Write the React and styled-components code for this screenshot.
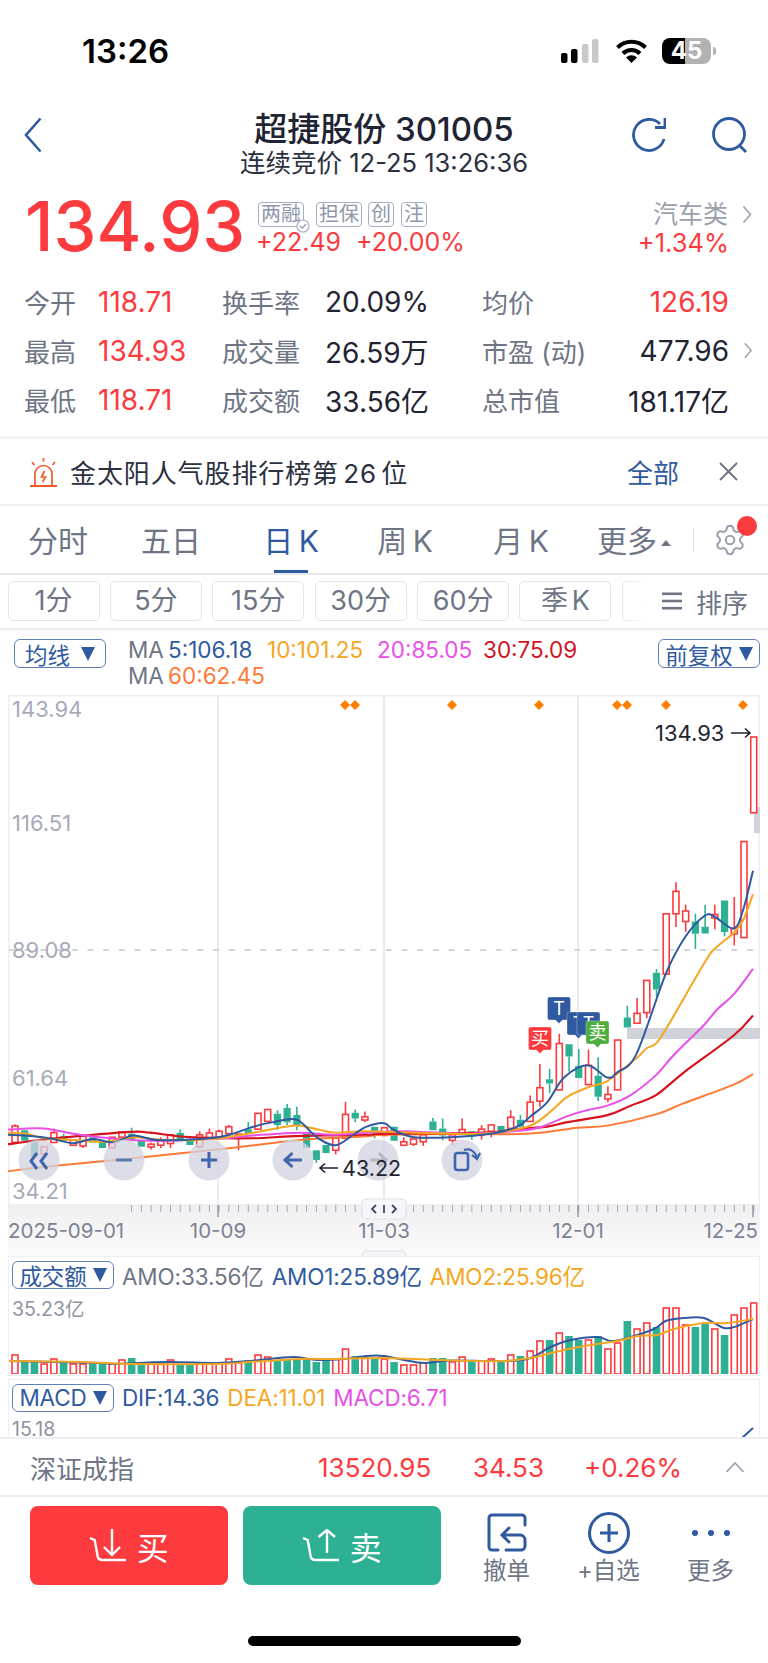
import React from 'react';
import styled, { createGlobalStyle } from 'styled-components';
import { Settings } from 'lucide-react';

const RED = '#fd3a3d';
const GREEN = '#2db094';
const BLUE = '#2f5aa0';
const ORANGE = '#f5a623';
const MAGENTA = '#e94fe9';
const DARKRED = '#d5121e';
const CORAL = '#ff7a35';
const GREY = '#6e7585';
const INK = '#1f2433';

const GlobalStyle = createGlobalStyle`
  html, body { margin: 0; padding: 0; background: #fff; }
  body { font-family: Inter, "Noto Sans CJK SC", sans-serif; }
  * { box-sizing: border-box; }
`;

const Page = styled.div`
  width: 768px;
  height: 1663px;
  overflow: hidden;
  background: #fff;
  display: flex;
  flex-direction: column;
  color: ${INK};
`;

/* status bar */
const StatusBar = styled.div`
  height: 100px;
  padding: 31px 57px 0 82px;
  display: flex;
  justify-content: space-between;
  align-items: flex-start;
`;
const Clock = styled.div`
  font-size: 33px;
  font-weight: 600;
  line-height: 40px;
  color: #000;
`;
const StatusIcons = styled.div`
  display: flex;
  align-items: center;
  height: 40px;
`;
const Battery = styled.div`
  width: 49px;
  height: 26px;
  margin-left: 14px;
  border-radius: 8px;
  background: linear-gradient(90deg, #000 47%, #b2b2b2 47%);
  color: #fff;
  font-size: 24px;
  font-weight: 700;
  line-height: 26px;
  text-align: center;
  position: relative;
  &::after {
    content: '';
    position: absolute;
    right: -5px;
    top: 9px;
    width: 3px;
    height: 8px;
    border-radius: 0 3px 3px 0;
    background: #b2b2b2;
  }
`;

/* nav */
const Nav = styled.div`
  height: 82px;
  display: flex;
  align-items: flex-start;
`;
const NavSide = styled.div`
  width: 140px;
  display: flex;
  justify-content: ${p => (p.$right ? 'flex-end' : 'flex-start')};
  gap: 46px;
  padding: 17px ${p => (p.$right ? '21px' : '0')} 0 ${p => (p.$right ? '0' : '24px')};
`;
const NavTitle = styled.div`
  flex: 1;
  text-align: center;
  padding-top: 9px;
`;
const Title = styled.div`
  font-size: 33px;
  font-weight: 500;
  line-height: 40px;
`;
const Subtitle = styled.div`
  font-size: 25.5px;
  line-height: 28px;
  color: #2b3040;
`;

/* quote head */
const QuoteHead = styled.div`
  height: 95px;
  padding: 0 16px 0 25px;
  display: flex;
`;
const BigPrice = styled.div`
  width: 233px;
  font-size: 68.5px;
  font-weight: 500;
  line-height: 66px;
  margin-top: 12px;
  color: ${RED};
`;
const QuoteMid = styled.div`
  flex: 1;
  padding-top: 20px;
`;
const TagRow = styled.div`
  display: flex;
`;
const Tag = styled.span`
  position: relative;
  height: 25px;
  padding: 0 2px;
  margin-right: ${p => p.$gap || 6}px;
  border: 1.3px solid #a7aec4;
  border-radius: 4px;
  color: #8f96ad;
  font-size: 20px;
  line-height: 22px;
  white-space: nowrap;
`;
const TagCheck = styled.svg`
  position: absolute;
  right: -7px;
  bottom: -7px;
  width: 14px;
  height: 14px;
`;
const ChangeRow = styled.div`
  display: flex;
  gap: 15px;
  margin-left: -2px;
  font-size: 25px;
  line-height: 30px;
  color: ${RED};
`;
const QuoteRight = styled.div`
  padding-top: 15px;
  text-align: right;
`;
const Sector = styled.div`
  display: flex;
  align-items: center;
  justify-content: flex-end;
  gap: 14px;
  font-size: 25px;
  line-height: 34px;
  color: #9a9fab;
`;
const SectorChange = styled.div`
  margin-right: 23px;
  margin-top: -3px;
  font-size: 25.5px;
  line-height: 30px;
  color: ${RED};
`;

/* stats */
const Stats = styled.div`
  padding-left: 24px;
  display: grid;
  grid-template-columns: 74px 124px 103px 157px 120px 127px 1fr;
  grid-auto-rows: 49px;
  align-items: center;
  font-size: 26px;
  height: 162px;
  border-bottom: 3px solid #f1f2f5;
`;
const StatLabel = styled.div`
  color: ${GREY};
  white-space: nowrap;
`;
const StatValue = styled.div`
  font-size: 28px;
  color: ${p => (p.$red ? RED : INK)};
  text-align: ${p => (p.$end ? 'right' : 'left')};
  white-space: nowrap;
`;
const StatArrow = styled.div`
  padding-left: 14px;
  display: flex;
  align-items: center;
`;

/* alert */
const AlertRow = styled.div`
  height: 67px;
  padding: 0 30px 0 29px;
  display: flex;
  align-items: center;
  border-bottom: 2px solid #eeeff2;
`;
const AlertText = styled.div`
  flex: 1;
  margin-left: 12px;
  font-size: 26px;
  letter-spacing: 0.9px;
  word-spacing: -4px;
  color: #2b3040;
`;
const AlertLink = styled.div`
  margin-right: 40px;
  font-size: 26px;
  color: ${BLUE};
`;

/* period tabs */
const Tabs = styled.div`
  height: 69px;
  display: flex;
  align-items: center;
  border-bottom: 2px solid #e8e9ee;
`;
const Tab = styled.div`
  position: relative;
  width: ${p => p.$w}px;
  height: 67px;
  line-height: 70px;
  text-align: center;
  font-size: 30px;
  word-spacing: -3px;
  color: ${p => (p.$active ? BLUE : GREY)};
  white-space: nowrap;
  &::after {
    content: '';
    display: ${p => (p.$active ? 'block' : 'none')};
    position: absolute;
    left: 50%;
    bottom: 0;
    margin-left: -17px;
    width: 34px;
    height: 3px;
    background: ${BLUE};
  }
`;
const Caret = styled.span`
  display: inline-block;
  width: 0;
  height: 0;
  margin-left: 4px;
  vertical-align: 6px;
  border-left: 5px solid transparent;
  border-right: 5px solid transparent;
  border-bottom: 6px solid ${GREY};
`;
const TabDivider = styled.div`
  width: 1px;
  height: 24px;
  margin-left: 13px;
  background: #e3e4e9;
`;
const GearWrap = styled.div`
  position: relative;
  margin-left: 19px;
  width: 34px;
  height: 34px;
`;
const RedDot = styled.div`
  position: absolute;
  left: 24px;
  top: -7px;
  width: 20px;
  height: 20px;
  border-radius: 50%;
  background: ${RED};
`;

/* chips */
const ChipRow = styled.div`
  position: relative;
  height: 55px;
  padding: 6px 0 0 7.5px;
  display: flex;
  gap: 10.4px;
  overflow: hidden;
  border-bottom: 2px solid #eceef1;
`;
const Chip = styled.div`
  flex: none;
  width: 92px;
  height: 40px;
  border: 1px solid #e4e5ea;
  border-radius: 5px;
  text-align: center;
  line-height: 38px;
  font-size: 27px;
  word-spacing: -4px;
  color: ${GREY};
`;
const SortButton = styled.div`
  position: absolute;
  right: 0;
  top: 2px;
  width: 145px;
  height: 48px;
  padding-right: 20px;
  display: flex;
  align-items: center;
  justify-content: flex-end;
  gap: 14px;
  font-size: 26px;
  color: ${GREY};
  background: linear-gradient(90deg, rgba(255, 255, 255, 0) 0, #fff 24px);
`;

/* MA legend */
const LegendRow = styled.div`
  height: 65px;
  padding: 9px 8px 0 14px;
  display: flex;
  align-items: flex-start;
`;
const Dropdown = styled.div`
  flex: none;
  width: ${p => p.$w}px;
  height: ${p => p.$h || 29}px;
  border: 1.5px solid #5f80b8;
  border-radius: 6px;
  display: flex;
  align-items: center;
  justify-content: center;
  gap: ${p => p.$gap || 6}px;
  font-size: 22.5px;
  color: ${BLUE};
  white-space: nowrap;
`;
const DownTriangle = styled.span`
  width: 0;
  height: 0;
  border-left: 7px solid transparent;
  border-right: 7px solid transparent;
  border-top: 14px solid ${BLUE};
`;
const LegendText = styled.div`
  flex: 1;
  margin: -2px 0 0 22px;
  font-size: 22.5px;
  line-height: 26px;
`;
const LegendLine = styled.div`
  display: flex;
  white-space: nowrap;
`;
const Legend = styled.span`
  width: ${p => p.$w}px;
  color: ${p => p.$color};
`;

/* chart panels */
const ChartWrap = styled.div`
  padding: 0 8px;
  display: flex;
  flex-direction: column;
`;
const PriceSvg = styled.svg`
  display: block;
  width: 752px;
  height: 561px;
`;
const Panel = styled.div`
  position: relative;
  height: ${p => p.$h}px;
  margin-bottom: ${p => p.$mb || 0}px;
  border: 1.5px solid #eceef2;
  border-bottom: ${p => (p.$open ? 'none' : '1.5px solid #eceef2')};
  overflow: hidden;
  background: #fff;
`;
const PanelHead = styled.div`
  height: 33px;
  padding: 2px 0 0 3px;
  display: flex;
  align-items: center;
  gap: 8px;
  font-size: 22.5px;
  letter-spacing: -0.15px;
  white-space: nowrap;
`;
const HeadValue = styled.span`
  color: ${p => p.$color};
`;
const PanelSvg = styled.svg`
  position: absolute;
  left: -1.5px;
  top: 33px;
  width: 752px;
  height: ${p => p.$h}px;
`;

/* bottom area */
const Bottom = styled.div`
  flex: 1;
  display: flex;
  flex-direction: column;
  border-top: 2px solid #eceef1;
  background: #fff;
`;
const IndexRow = styled.div`
  height: 58px;
  padding-left: 30px;
  display: flex;
  align-items: center;
  border-bottom: 2px solid #eceef1;
  font-size: 26px;
`;
const IndexName = styled.div`
  width: 288px;
  color: ${GREY};
`;
const IndexValue = styled.div`
  width: ${p => p.$w}px;
  color: ${RED};
`;
const ActionRow = styled.div`
  padding: 9px 0 0 30px;
  display: flex;
  align-items: flex-start;
`;
const TradeButton = styled.div`
  width: 197.5px;
  height: 79px;
  margin-right: ${p => p.$mr}px;
  border-radius: 8px;
  background: ${p => p.$color};
  display: flex;
  align-items: center;
  justify-content: center;
  gap: 10px;
  color: #fff;
  font-size: 32px;
`;
const ActionItem = styled.div`
  width: 102px;
  display: flex;
  flex-direction: column;
  align-items: center;
  font-size: 23.5px;
  line-height: 26px;
  color: ${GREY};
  white-space: nowrap;
`;
const ActionIcon = styled.svg`
  width: 42px;
  height: 42px;
  margin-top: 6px;
  margin-bottom: 4px;
  display: block;
`;
const HomeBar = styled.div`
  width: 273px;
  height: 10px;
  margin: 51px auto 0;
  border-radius: 5px;
  background: #000;
`;

/* ---- chart data, read off the picture ---- */
const X = i => 15 + 9.72 * i;
const Y = zy => 690 + zy / 2.851;

// [red?, bodyTop, bodyBottom, high, low]
const candles = [
  [1, 1243, 1290, 1238, 1295], [0, 1255, 1285], [0, 1290, 1330], [1, 1302, 1322], [1, 1262, 1290, 1250],
  [0, 1272, 1285, 1265], [1, 1283, 1298], [1, 1272, 1300, 1272, 1306], [0, 1275, 1290], [0, 1288, 1306],
  [1, 1275, 1305], [1, 1260, 1275], [0, 1265, 1285, 1248], [0, 1285, 1302], [1, 1295, 1303, 1290, 1310],
  [1, 1285, 1298, 1275, 1306], [1, 1268, 1293, 1268, 1306], [0, 1262, 1280, 1253], [0, 1285, 1297], [1, 1268, 1302, 1258],
  [1, 1263, 1280, 1250], [1, 1258, 1278, 1253], [1, 1245, 1265, 1240], [1, 1266, 1270, 1266, 1312], [0, 1252, 1265, 1232],
  [1, 1207, 1252], [1, 1196, 1230], [0, 1208, 1240, 1198, 1254], [0, 1192, 1232, 1180, 1240], [0, 1212, 1242, 1188, 1255],
  [0, 1265, 1305], [0, 1312, 1340, 1312, 1348], [0, 1297, 1320], [1, 1278, 1312, 1278, 1324], [1, 1210, 1278, 1174],
  [0, 1205, 1222, 1196, 1232], [1, 1217, 1226, 1202, 1232], [0, 1245, 1265, 1245, 1278], [1, 1248, 1270], [0, 1245, 1285],
  [1, 1288, 1298, 1275], [1, 1280, 1295, 1280, 1300], [1, 1268, 1288, 1268, 1300], [0, 1230, 1255, 1220], [0, 1250, 1270, 1222, 1284],
  [1, 1268, 1284, 1268, 1298], [1, 1253, 1264, 1222], [0, 1258, 1272, 1258, 1282], [1, 1252, 1268, 1240, 1282], [1, 1240, 1258, 1240, 1275],
  [0, 1243, 1258], [1, 1218, 1250, 1198], [0, 1225, 1245, 1212], [1, 1175, 1230, 1156], [1, 1134, 1172, 1066, 1188],
  [0, 1110, 1122, 1080, 1150], [1, 1008, 1140, 980], [0, 1010, 1045, 1010, 1088], [0, 1072, 1106, 1024], [1, 1070, 1125, 1025],
  [0, 1100, 1160, 1047, 1172], [1, 1153, 1166, 1130, 1175], [1, 998, 1140], [0, 934, 962, 900], [1, 922, 950, 878],
  [1, 828, 920, 828, 935], [0, 806, 854, 796, 874], [1, 638, 810], [1, 574, 638, 548, 676], [1, 630, 660, 612, 690],
  [0, 660, 695, 638, 738], [0, 675, 694, 612], [1, 640, 650, 612, 682], [0, 600, 690, 600, 702], [1, 680, 695, 590, 728],
  [1, 432, 706], [1, 134, 350],
];

const volumes = [
  19, 12, 12, 10, 15, 12, 10, 10, 10, 10, 10, 14, 16, 10, 10, 10, 14, 10, 10, 11, 11, 11, 15, 11, 14, 19, 17, 14, 14, 14,
  16, 12, 14, 15, 25, 18, 16, 15, 15, 12, 9, 9, 11, 16, 16, 12, 17, 13, 13, 15, 13, 19, 18, 23, 33, 34, 41, 38, 34, 34,
  38, 25, 31, 53, 45, 51, 47, 66, 66, 49, 47, 50, 45, 39, 59, 66, 71,
];

// left half in zoom units of x/3, right half offset by 1152 (same scale)
const ma5 = [[24,1268],[100,1272],[160,1280],[220,1292],[280,1280],[340,1290],[400,1270],[470,1283],[600,1280],[680,1270],[760,1245],[820,1232],[890,1225],[950,1275],[1006,1298],[1060,1268],[1100,1245],[1152,1235],[1182,1255],[1242,1275],[1352,1275],[1472,1265],[1552,1245],[1592,1215],[1642,1175],[1692,1105],[1762,1070],[1822,1105],[1852,1090],[1909,1038],[1997,810],[2055,705],[2112,645],[2142,645],[2201,680],[2230,625],[2259,515]];
const ma10 = [[24,1262],[80,1265],[130,1278],[220,1283],[320,1288],[400,1275],[500,1283],[640,1280],[760,1262],[880,1242],[950,1252],[1006,1262],[1100,1258],[1252,1262],[1452,1265],[1582,1245],[1642,1210],[1702,1160],[1772,1130],[1822,1115],[1909,1050],[1939,1022],[1968,1008],[2002,960],[2112,780],[2142,740],[2201,692],[2230,655],[2259,582]];
const ma20 = [[24,1253],[130,1250],[220,1265],[330,1278],[450,1285],[640,1280],[760,1270],[900,1262],[1000,1268],[1100,1262],[1212,1258],[1402,1265],[1572,1255],[1632,1243],[1702,1215],[1762,1198],[1822,1185],[1892,1155],[1968,1098],[2022,1040],[2112,955],[2152,910],[2201,868],[2259,795]];
const ma30 = [[24,1295],[100,1285],[200,1275],[390,1260],[450,1262],[570,1275],[760,1278],[880,1272],[1100,1268],[1152,1265],[1452,1262],[1552,1252],[1642,1245],[1702,1232],[1822,1212],[1892,1185],[1968,1155],[2052,1090],[2201,985],[2259,928]];
const ma60 = [[24,1372],[150,1358],[400,1335],[700,1305],[900,1283],[1100,1272],[1152,1268],[1352,1266],[1552,1266],[1642,1260],[1732,1248],[1822,1242],[1968,1210],[2052,1178],[2201,1125],[2259,1095]];

// heights above the volume base, x in the same units
const amo1 = [[24,13],[300,11],[340,10],[500,12],[650,11],[750,13],[880,17],[950,14],[1030,15],[1100,18],[1152,18],[1212,14],[1272,11],[1352,13.5],[1492,13],[1582,15],[1652,27],[1712,34],[1792,37],[1832,33],[1872,35],[1962,45],[1997,53],[2052,56],[2112,56],[2172,46],[2212,48],[2259,55]];
const amo2 = [[24,13],[250,12],[400,10],[650,10],[750,12],[900,15],[1000,15],[1152,16],[1352,13.5],[1512,13],[1592,16],[1692,24],[1792,30],[1852,33],[1912,38],[1972,39],[2022,45],[2112,51],[2182,51],[2259,55]];

const toPoint = ([zx, zy]) => [zx / 3, Y(zy)];
const toVolPoint = ([zx, h]) => [zx / 3, 1375 - h];

// smooth a list of points into a path
const smooth = pts => {
  let d = `M${pts[0][0]} ${pts[0][1]}`;
  for (let i = 0; i < pts.length - 1; i++) {
    const p0 = pts[i - 1] || pts[i];
    const p1 = pts[i];
    const p2 = pts[i + 1];
    const p3 = pts[i + 2] || p2;
    const c1x = p1[0] + (p2[0] - p0[0]) / 6;
    const c1y = p1[1] + (p2[1] - p0[1]) / 6;
    const c2x = p2[0] - (p3[0] - p1[0]) / 6;
    const c2y = p2[1] - (p3[1] - p1[1]) / 6;
    d += ` C${c1x} ${c1y} ${c2x} ${c2y} ${p2[0]} ${p2[1]}`;
  }
  return d;
};

const Candle = ({ i, data }) => {
  const [red, top, bottom, high, low] = data;
  const color = red ? RED : GREEN;
  const x = X(i);
  const yTop = Y(top);
  const yBottom = Y(bottom);
  return (
    <g>
      {high !== undefined && high < top && <line x1={x} x2={x} y1={Y(high)} y2={yTop} stroke={color} strokeWidth="1.6" />}
      {low !== undefined && low > bottom && <line x1={x} x2={x} y1={yBottom} y2={Y(low)} stroke={color} strokeWidth="1.6" />}
      {red ? (
        <rect x={x - 3} y={yTop} width="6" height={yBottom - yTop} fill="#fff" stroke={color} strokeWidth="1.6" />
      ) : (
        <rect x={x - 3.6} y={yTop} width="7.2" height={yBottom - yTop} fill={color} rx="0.5" />
      )}
    </g>
  );
};

const Marker = ({ x, y, color, text, fontSize = 18 }) => (
  <g>
    <path
      d={`M${x + 2} ${y} h19 a2 2 0 0 1 2 2 v19 a2 2 0 0 1 -2 2 h-6 l-3.5 3.5 l-3.5 -3.5 h-6 a2 2 0 0 1 -2 -2 v-19 a2 2 0 0 1 2 -2 Z`}
      fill={color}
      stroke="#fff"
      strokeOpacity="0.5"
      strokeWidth="0.6"
    />
    <text x={x + 11.5} y={y + 18} fontSize={fontSize} fill="#fff" textAnchor="middle" fontFamily='Inter, "Noto Sans CJK SC", sans-serif'>
      {text}
    </text>
  </g>
);

const axisFont = 'Inter, "Noto Sans CJK SC", sans-serif';

const PriceChart = () => (
  <PriceSvg viewBox="8 695 752 561">
    <defs>
      <linearGradient id="band" x1="0" x2="0" y1="0" y2="1">
        <stop offset="0" stopColor="#efeff1" />
        <stop offset="1" stopColor="#fbfbfc" />
      </linearGradient>
    </defs>
    <rect x="8.7" y="695.7" width="750.6" height="509" fill="#fff" stroke="#eceef2" strokeWidth="1.5" />
    <rect x="8" y="1204" width="752" height="52" fill="url(#band)" />

    {[218, 384, 578].map(x => (
      <line key={x} x1={x} x2={x} y1="696" y2="1204" stroke="#dcdee6" strokeWidth="1.2" />
    ))}
    <line x1="9" x2="760" y1="950" y2="950" stroke="#c5c8d4" strokeWidth="1.6" strokeDasharray="6 9.7" />

    {[['143.94', 709], ['116.51', 822.5], ['89.08', 950], ['61.64', 1077.5], ['34.21', 1191]].map(([label, y]) => (
      <text key={label} x="12" y={y + 8} fontSize="22" fill="#a7abb9" fontFamily={axisFont}>{label}</text>
    ))}

    <rect x="754" y="807" width="6" height="26" fill="#d0d2d9" />
    <rect x="627" y="1028" width="133" height="11" fill="#d0d2d9" />

    {candles.map((c, i) => <Candle key={i} i={i} data={c} />)}

    <path d={smooth(ma60.map(toPoint))} fill="none" stroke={CORAL} strokeWidth="2" />
    <path d={smooth(ma30.map(toPoint))} fill="none" stroke={DARKRED} strokeWidth="2.2" />
    <path d={smooth(ma20.map(toPoint))} fill="none" stroke={MAGENTA} strokeWidth="2" />
    <path d={smooth(ma10.map(toPoint))} fill="none" stroke={ORANGE} strokeWidth="2" />
    <path d={smooth(ma5.map(toPoint))} fill="none" stroke={BLUE} strokeWidth="2" />

    {[345, 355, 452, 539, 617, 627, 666, 743].map(x => (
      <path key={x} d={`M${x} 700 l5 5 l-5 5 l-5 -5 Z`} fill="#ff8000" />
    ))}

    <Marker x={547.5} y={997} color={BLUE} text="T" />
    <Marker x={567} y={1012} color={BLUE} text="T" />
    <Marker x={577} y={1012} color={BLUE} text="T" />
    <Marker x={586} y={1021} color="#4cae3c" text="卖" />
    <Marker x={528.5} y={1027} color={RED} text="买" />

    {[39, 124, 209, 293, 378, 462].map(x => (
      <circle key={x} cx={x} cy="1160" r="20.5" fill="#d2d4e0" fillOpacity="0.78" />
    ))}
    <g fill="none" stroke="#3f66ad" strokeWidth="3">
      <path d="M37 1153 L31 1161 L37 1169 M47 1153 L41 1161 L47 1169" />
      <path d="M116 1160 H132" stroke="#5b78b0" />
      <path d="M201 1160 H217 M209 1152 V1168" />
      <path d="M285 1160 H302 M292.5 1153 L285 1160 L292.5 1167" />
      <path d="M370 1160 H386 M379 1153 L386 1160 L379 1167" stroke="#b5b9c6" />
      <rect x="455" y="1153" width="13" height="17" rx="2.5" strokeWidth="2.6" />
      <path d="M464 1150 C470 1148 475 1151 477 1158 M472 1155 L477 1159 L480 1153" strokeWidth="2.2" />
    </g>

    <path d="M338 1168 H320 M325 1163.5 L320 1168 L325 1172.5" fill="none" stroke={INK} strokeWidth="1.6" />
    <text x="342" y="1176" fontSize="21.5" fill={INK} fontFamily={axisFont}>43.22</text>
    <text x="655" y="741" fontSize="22" fill={INK} fontFamily={axisFont}>134.93</text>
    <path d="M731 733 H750 M745 728.5 L750 733 L745 737.5" fill="none" stroke={INK} strokeWidth="1.6" />

    {candles.map((_, i) =>
      i >= 12 ? <line key={i} x1={X(i)} x2={X(i)} y1="1205" y2="1212" stroke="#a3a7b1" strokeWidth="1" /> : null
    )}
    {[218, 578, 753].map(x => (
      <line key={x} x1={x} x2={x} y1="1205" y2="1217" stroke="#7f8494" strokeWidth="1.2" />
    ))}
    <rect x="362" y="1199" width="44" height="20" rx="4" fill="#f6f7fb" stroke="#e0e2ea" />
    <path d="M376 1205 L372 1209 L376 1213 M392 1205 L396 1209 L392 1213 M384 1205 V1213" fill="none" stroke="#3a4a6b" strokeWidth="1.8" />
    <rect x="362" y="1251" width="44" height="10" rx="4" fill="#f2f4f9" stroke="#e0e2ea" />

    {[['2025-09-01', 8, 'start'], ['10-09', 218, 'middle'], ['11-03', 384, 'middle'], ['12-01', 578, 'middle'], ['12-25', 758, 'end']].map(([label, x, anchor]) => (
      <text key={label} x={x} y="1238" fontSize="20.5" fill="#7c8292" textAnchor={anchor} fontFamily={axisFont}>{label}</text>
    ))}
  </PriceSvg>
);

const VolumeChart = () => (
  <PanelSvg $h={84} viewBox="8 1291 752 84">
    <text x="12" y="1317" fontSize="19.5" fill="#8e93a1" fontFamily={axisFont}>35.23亿</text>
    {volumes.map((h, i) =>
      candles[i][0] ? (
        <rect key={i} x={X(i) - 3} y={1375 - h} width="6" height={h} fill="#fff" stroke={RED} strokeWidth="1.6" />
      ) : (
        <rect key={i} x={X(i) - 3.8} y={1375 - h} width="7.6" height={h} fill={GREEN} />
      )
    )}
    <path d={smooth(amo1.map(toVolPoint))} fill="none" stroke={BLUE} strokeWidth="2" />
    <path d={smooth(amo2.map(toVolPoint))} fill="none" stroke={ORANGE} strokeWidth="2" />
  </PanelSvg>
);

const MacdChart = () => (
  <PanelSvg $h={25} viewBox="8 1412 752 25">
    <text x="12" y="1434.5" fontSize="19.5" fill="#8e93a1" fontFamily={axisFont}>15.18</text>
    <path d="M742 1437 L753 1427" fill="none" stroke={BLUE} strokeWidth="2" />
  </PanelSvg>
);

const Chevron = ({ w = 10, h = 19, color = '#9aa0ae' }) => (
  <svg width={w} height={h} viewBox="0 0 10 19" fill="none">
    <path d="M1.5 1.5 L8.5 9.5 L1.5 17.5" stroke={color} strokeWidth="1.6" />
  </svg>
);

const App = () => (
  <Page>
    <GlobalStyle />
    <StatusBar>
      <Clock>13:26</Clock>
      <StatusIcons>
        <svg width="38" height="24" viewBox="0 0 38 24" style={{ marginRight: 16 }}>
          <rect x="0" y="14" width="6.5" height="10" rx="2" fill="#000" />
          <rect x="10" y="10" width="6.5" height="14" rx="2" fill="#000" />
          <rect x="21" y="5" width="6.5" height="19" rx="2" fill="#c9c9c9" />
          <rect x="31" y="0" width="6.5" height="24" rx="2" fill="#c9c9c9" />
        </svg>
        <svg width="33" height="24" viewBox="0 0 33 24" fill="none">
          <path d="M2.5 8.5 A20 20 0 0 1 30.5 8.5" stroke="#000" strokeWidth="4" />
          <path d="M8 14.5 A12 12 0 0 1 25 14.5" stroke="#000" strokeWidth="4" />
          <path d="M16.5 24 L11 18.6 A7.5 7.5 0 0 1 22 18.6 Z" fill="#000" />
        </svg>
        <Battery>45</Battery>
      </StatusIcons>
    </StatusBar>

    <Nav>
      <NavSide>
        <svg width="18" height="36" viewBox="0 0 18 36" fill="none">
          <path d="M16.5 1.5 L2 18 L16.5 34.5" stroke={BLUE} strokeWidth="2.6" />
        </svg>
      </NavSide>
      <NavTitle>
        <Title>超捷股份 301005</Title>
        <Subtitle>连续竞价 12-25 13:26:36</Subtitle>
      </NavTitle>
      <NavSide $right>
        <svg width="35" height="36" viewBox="0 0 35 36" fill="none" stroke={BLUE} strokeWidth="2.8">
          <path d="M33 22 A15.5 15.5 0 1 1 29 7" />
          <path d="M34 1 V10.5 H24" />
        </svg>
        <svg width="35" height="36" viewBox="0 0 35 36" fill="none" stroke={BLUE} strokeWidth="2.8">
          <circle cx="17" cy="17" r="15.5" />
          <path d="M27 28 L34 35" />
        </svg>
      </NavSide>
    </Nav>

    <QuoteHead>
      <BigPrice>134.93</BigPrice>
      <QuoteMid>
        <TagRow>
          <Tag $gap={12}>
            两融
            <TagCheck viewBox="0 0 14 14" fill="none">
              <circle cx="7" cy="7" r="6" fill="#fff" stroke="#a7aec4" strokeWidth="1.2" />
              <path d="M4 7 L6.3 9.2 L10 5" stroke="#8f96ad" strokeWidth="1.2" />
            </TagCheck>
          </Tag>
          <Tag>担保</Tag>
          <Tag $gap={7}>创</Tag>
          <Tag>注</Tag>
        </TagRow>
        <ChangeRow>
          <span>+22.49</span>
          <span>+20.00%</span>
        </ChangeRow>
      </QuoteMid>
      <QuoteRight>
        <Sector>
          汽车类
          <Chevron />
        </Sector>
        <SectorChange>+1.34%</SectorChange>
      </QuoteRight>
    </QuoteHead>

    <Stats>
      <StatLabel>今开</StatLabel>
      <StatValue $red>118.71</StatValue>
      <StatLabel>换手率</StatLabel>
      <StatValue>20.09%</StatValue>
      <StatLabel>均价</StatLabel>
      <StatValue $red $end>126.19</StatValue>
      <div />

      <StatLabel>最高</StatLabel>
      <StatValue $red>134.93</StatValue>
      <StatLabel>成交量</StatLabel>
      <StatValue>26.59万</StatValue>
      <StatLabel>市盈 (动)</StatLabel>
      <StatValue $end>477.96</StatValue>
      <StatArrow><Chevron h={17} /></StatArrow>

      <StatLabel>最低</StatLabel>
      <StatValue $red>118.71</StatValue>
      <StatLabel>成交额</StatLabel>
      <StatValue>33.56亿</StatValue>
      <StatLabel>总市值</StatLabel>
      <StatValue $end>181.17亿</StatValue>
      <div />
    </Stats>

    <AlertRow>
      <svg width="29" height="30" viewBox="0 0 29 30" fill="none" stroke="#f0592a" strokeWidth="1.7">
        <path d="M1 29 H28" strokeWidth="2" />
        <path d="M6 28 V17 A8.5 8.5 0 0 1 23 17 V28" />
        <path d="M15.5 14 L12.5 20 H16.5 L13.5 25" />
        <path d="M14.5 1 V4.5 M3 5 L5.5 8 M26 5 L23.5 8" />
      </svg>
      <AlertText>金太阳人气股排行榜第 26 位</AlertText>
      <AlertLink>全部</AlertLink>
      <svg width="19" height="19" viewBox="0 0 19 19" fill="none" stroke="#6b7280" strokeWidth="1.8">
        <path d="M1 1 L18 18 M18 1 L1 18" />
      </svg>
    </AlertRow>

    <Tabs>
      <Tab $w={116}>分时</Tab>
      <Tab $w={110}>五日</Tab>
      <Tab $w={130} $active>日 K</Tab>
      <Tab $w={98}>周 K</Tab>
      <Tab $w={134}>月 K</Tab>
      <Tab $w={92}>更多<Caret /></Tab>
      <TabDivider />
      <GearWrap>
        <Settings size={34} color="#9aa0ae" strokeWidth={1.4} />
        <RedDot />
      </GearWrap>
    </Tabs>

    <ChipRow>
      <Chip>1分</Chip>
      <Chip>5分</Chip>
      <Chip>15分</Chip>
      <Chip>30分</Chip>
      <Chip>60分</Chip>
      <Chip>季 K</Chip>
      <Chip>年 K</Chip>
      <SortButton>
        <svg width="20" height="18" viewBox="0 0 20 18" fill={GREY}>
          <rect width="20" height="2.6" y="0.5" />
          <rect width="20" height="2.6" y="7.7" />
          <rect width="20" height="2.6" y="14.9" />
        </svg>
        排序
      </SortButton>
    </ChipRow>

    <LegendRow>
      <Dropdown $w={92} $gap={11}>均线<DownTriangle /></Dropdown>
      <LegendText>
        <LegendLine>
          <Legend $w={40} $color={GREY}>MA</Legend>
          <Legend $w={99} $color={BLUE}>5:106.18</Legend>
          <Legend $w={110} $color={ORANGE}>10:101.25</Legend>
          <Legend $w={106} $color={MAGENTA}>20:85.05</Legend>
          <Legend $w={90} $color={DARKRED}>30:75.09</Legend>
        </LegendLine>
        <LegendLine>
          <Legend $w={40} $color={GREY}>MA</Legend>
          <Legend $w={99} $color={CORAL}>60:62.45</Legend>
        </LegendLine>
      </LegendText>
      <Dropdown $w={102}>前复权<DownTriangle /></Dropdown>
    </LegendRow>

    <ChartWrap>
      <PriceChart />
      <Panel $h={120} $mb={3}>
        <PanelHead>
          <Dropdown $w={102} $h={28}>成交额<DownTriangle /></Dropdown>
          <HeadValue $color={GREY}>AMO:33.56亿</HeadValue>
          <HeadValue $color={BLUE}>AMO1:25.89亿</HeadValue>
          <HeadValue $color={ORANGE}>AMO2:25.96亿</HeadValue>
        </PanelHead>
        <VolumeChart />
      </Panel>
      <Panel $h={58} $open>
        <PanelHead>
          <Dropdown $w={102} $h={28}>MACD<DownTriangle /></Dropdown>
          <HeadValue $color={BLUE}>DIF:14.36</HeadValue>
          <HeadValue $color={ORANGE}>DEA:11.01</HeadValue>
          <HeadValue $color={MAGENTA}>MACD:6.71</HeadValue>
        </PanelHead>
        <MacdChart />
      </Panel>
    </ChartWrap>

    <Bottom>
      <IndexRow>
        <IndexName>深证成指</IndexName>
        <IndexValue $w={155}>13520.95</IndexValue>
        <IndexValue $w={111}>34.53</IndexValue>
        <IndexValue $w={141}>+0.26%</IndexValue>
        <svg width="20" height="12" viewBox="0 0 20 12" fill="none" stroke="#9aa0ae" strokeWidth="1.6">
          <path d="M1.5 11 L10 2 L18.5 11" />
        </svg>
      </IndexRow>
      <ActionRow>
        <TradeButton $color={RED} $mr={15.5}>
          <svg width="38" height="33" viewBox="0 0 38 33" fill="none" stroke="#fff" strokeWidth="2.4">
            <path d="M1 9 L5.7 11 L8.8 28 Q9.6 31 13.4 31 H37" />
            <path d="M23 0 V25 M15 18 L23 26 L31 18" />
          </svg>
          买
        </TradeButton>
        <TradeButton $color={GREEN} $mr={15}>
          <svg width="38" height="33" viewBox="0 0 38 33" fill="none" stroke="#fff" strokeWidth="2.4">
            <path d="M1 9 L5.7 11 L8.8 28 Q9.6 31 13.4 31 H37" />
            <path d="M25 1 V24 M16.5 8 L25 1 L33 8" />
          </svg>
          卖
        </TradeButton>
        <ActionItem>
          <ActionIcon viewBox="0 0 42 42" fill="none" stroke={BLUE} strokeWidth="3" strokeLinecap="round">
            <path d="M39 13 V6 a3 3 0 0 0 -3 -3 H6 a3 3 0 0 0 -3 3 V35 a3 3 0 0 0 3 3 H12" />
            <path d="M23 16 L16 23 L23 30 M16 23 H34 a5 5 0 0 1 5 5 V34 a4 4 0 0 1 -4 4 H20" />
          </ActionIcon>
          撤单
        </ActionItem>
        <ActionItem>
          <ActionIcon viewBox="0 0 42 42" fill="none" stroke={BLUE} strokeWidth="3">
            <circle cx="21" cy="21" r="19.5" />
            <path d="M21 12 V30 M12 21 H30" />
          </ActionIcon>
          +自选
        </ActionItem>
        <ActionItem>
          <ActionIcon viewBox="0 0 42 42" fill={BLUE}>
            <circle cx="5" cy="21" r="3" />
            <circle cx="21" cy="21" r="3" />
            <circle cx="37" cy="21" r="3" />
          </ActionIcon>
          更多
        </ActionItem>
      </ActionRow>
      <HomeBar />
    </Bottom>
  </Page>
);

export default App;
